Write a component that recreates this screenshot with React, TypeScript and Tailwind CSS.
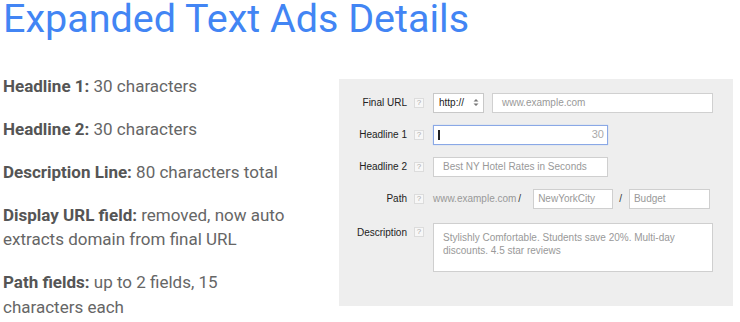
import React from 'react';

const Help: React.FC = () => (
  <span className="ml-[7px] mr-[9px] flex h-[10px] w-[10px] flex-shrink-0 items-center justify-center border border-[#dcdcdc] bg-[#f7f7f7] text-[8px] leading-none text-[#aaa]">
    ?
  </span>
);

const Row: React.FC<{ label: string; top?: boolean; children: React.ReactNode }> = ({ label, top, children }) => (
  <div className={`flex ${top ? 'items-start' : 'items-center'}`}>
    <div className={`flex w-[94px] flex-shrink-0 items-center justify-end ${top ? 'pt-[2px]' : ''}`}>
      <span className="text-[10px] text-[#222]">{label}</span>
      <Help />
    </div>
    {children}
  </div>
);

const points = [
  { b: 'Headline 1:', t: ' 30 characters' },
  { b: 'Headline 2:', t: ' 30 characters' },
  { b: 'Description Line:', t: ' 80 characters total' },
  { b: 'Display URL field:', t: ' removed, now auto extracts domain from final URL' },
  { b: 'Path fields:', t: ' up to 2 fields, 15 characters each' },
];

export default function App() {
  return (
    <div className="h-[322px] w-[740px] overflow-hidden bg-white font-['Roboto',sans-serif]">
      <h1 className="-mt-[1px] pl-[3px] text-[39.5px] leading-none text-[#4285f4]">Expanded Text Ads Details</h1>
      <div className="flex items-start">
        <ul className="mt-[35px] w-[300px] flex-shrink-0 pl-[3px] pr-[5px] text-[17px] leading-[24.5px] text-[#666]">
          {points.map((p) => (
            <li key={p.b} className="mb-[18.5px]">
              <b className="font-bold text-[#555]">{p.b}</b>
              {p.t}
            </li>
          ))}
        </ul>
        <div className="ml-[39px] mt-[40px] flex h-[227px] w-[394px] flex-col gap-[12px] bg-[#eeeeee] pt-[14px] font-['Liberation_Sans',Arial,sans-serif]">
          <Row label="Final URL">
            <div className="flex h-[20px] w-[51px] items-center justify-between border border-[#c8c8c8] bg-white pl-[5px] pr-[4px] text-[10px] text-[#222]">
              <span>http://</span>
              <svg width="6" height="9" viewBox="0 0 6 9">
                <path d="M0.5 3.5 L3 1 L5.5 3.5 Z M0.5 5.5 L3 8 L5.5 5.5 Z" fill="#777" />
              </svg>
            </div>
            <div className="ml-[8px] flex h-[20px] w-[221px] items-center border border-[#d0d0d0] bg-white pl-[9px] text-[10px] text-[#999]">
              www.example.com
            </div>
          </Row>
          <Row label="Headline 1">
            <div className="flex h-[20px] w-[175px] items-center justify-between border border-[#8aa8e6] bg-white pl-[4px] pr-[3px] text-[11px] text-[#aaa] shadow-[0_0_1px_#a8c0ee]">
              <span className="h-[10px] w-[1.5px] bg-[#222]" />
              <span>30</span>
            </div>
          </Row>
          <Row label="Headline 2">
            <div className="flex h-[20px] w-[175px] items-center border border-[#cfcfcf] bg-white pl-[9px] text-[10px] text-[#999]">
              Best NY Hotel Rates in Seconds
            </div>
          </Row>
          <Row label="Path">
            <span className="text-[10px] text-[#999]">www.example.com</span>
            <span className="ml-[2px] text-[10px] text-[#333]">/</span>
            <div className="ml-[12px] flex h-[20px] w-[80px] items-center border border-[#cfcfcf] bg-white pl-[4px] text-[10px] text-[#999]">
              NewYorkCity
            </div>
            <span className="ml-[6px] mr-[7px] text-[10px] text-[#333]">/</span>
            <div className="flex h-[20px] w-[81px] items-center border border-[#cfcfcf] bg-white pl-[4px] text-[10px] text-[#999]">
              Budget
            </div>
          </Row>
          <div className="mt-[2px]">
            <Row label="Description" top>
              <div className="h-[49px] w-[280px] border border-[#cfcfcf] bg-white pl-[9px] pr-[20px] pt-[7px] text-[10px] leading-[13px] text-[#999]">
                Stylishly Comfortable. Students save 20%. Multi-day discounts. 4.5 star reviews
              </div>
            </Row>
          </div>
        </div>
      </div>
    </div>
  );
}
